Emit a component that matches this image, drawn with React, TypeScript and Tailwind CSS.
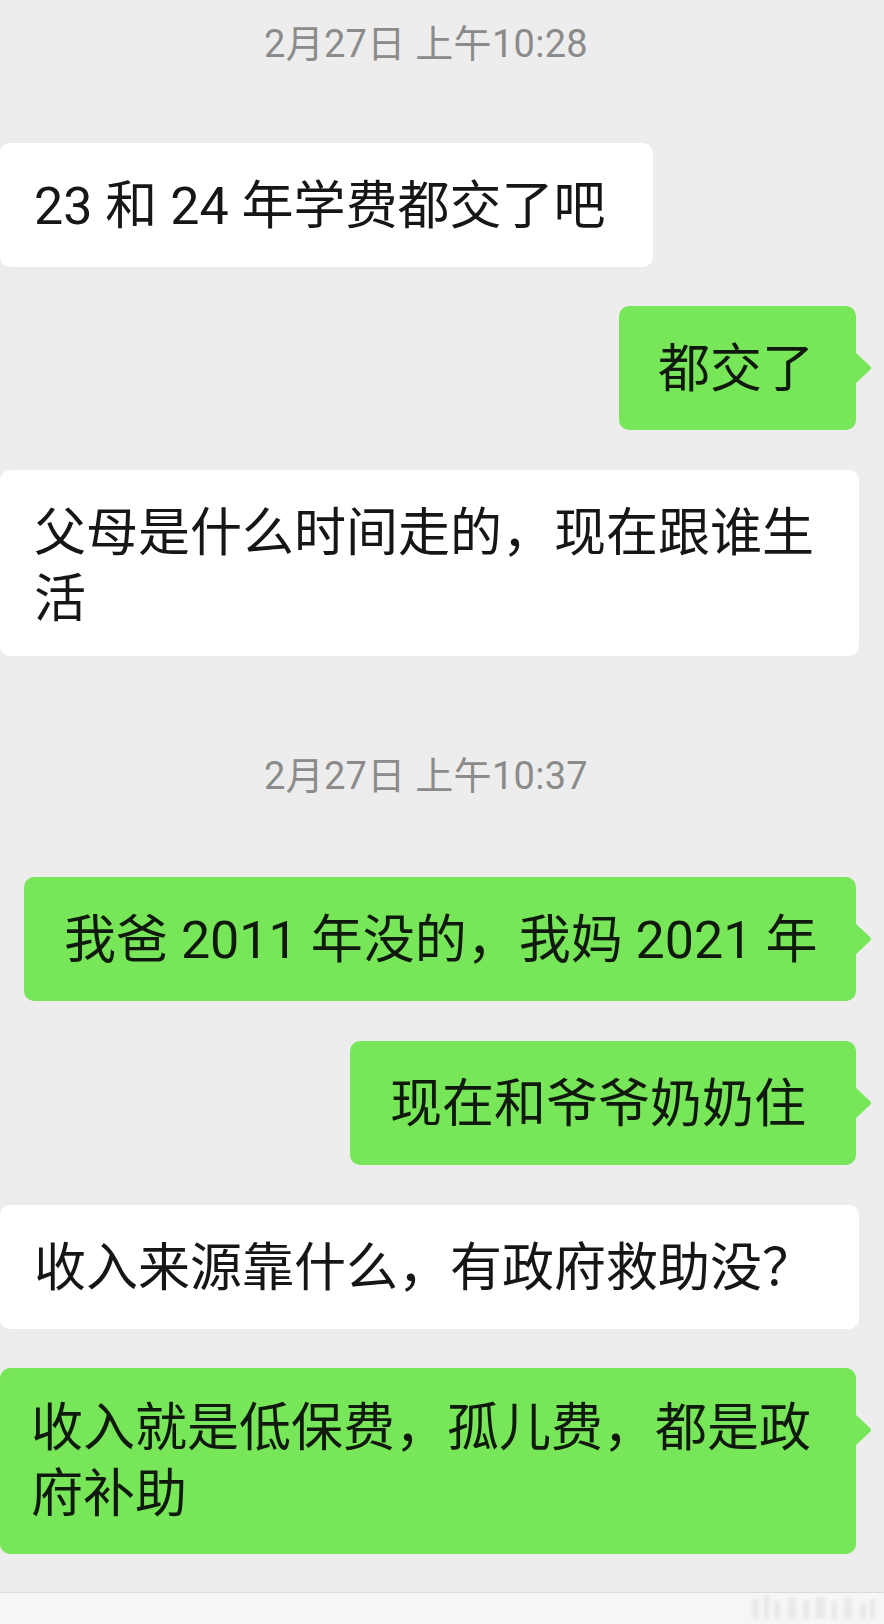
import React from "react";

const font = "font-['Roboto','Noto_Sans_CJK_SC',sans-serif]";

function Time({ text, mt }: { text: string; mt: string }) {
  return (
    <div className={`${mt} pr-[32px] text-center text-[38px] leading-[44px] tracking-[0.3px] text-[#8b8b8b] ${font}`}>{text}</div>
  );
}

function Tail() {
  return (
    <svg
      className="absolute right-[-16px] top-[46px]"
      width="17"
      height="32"
      viewBox="0 0 17 32"
    >
      <path d="M0 0 L15 14 Q17 16 15 18 L0 32 Z" fill="#78e659" />
    </svg>
  );
}

export default function App() {
  return (
    <div className={`w-[884px] h-[1624px] overflow-hidden bg-[#ededed] flex flex-col ${font}`}>
      <Time text="2月27日 上午10:28" mt="mt-[22px]" />

      <div className="mt-[77px] self-start w-[653px] bg-white rounded-[10px] pl-[34px] pt-[32px] pb-[28px] text-[52px] leading-[64px] text-[#161616] whitespace-nowrap">
        23 和 24 年学费都交了吧
      </div>

      <div className="relative mt-[39px] self-end mr-[28px] w-[237px] bg-[#78e659] rounded-[10px] pl-[39px] pt-[32px] pb-[28px] text-[52px] leading-[64px] text-[#101a0c] whitespace-nowrap">
        都交了
        <Tail />
      </div>

      <div className="mt-[40px] self-start w-[859px] bg-white rounded-[10px] pl-[34px] pt-[31px] pb-[23px] text-[52px] leading-[66px] text-[#161616] whitespace-nowrap">
        父母是什么时间走的，现在跟谁生
        <br />
        活
      </div>

      <Time text="2月27日 上午10:37" mt="mt-[98px]" />

      <div className="relative mt-[79px] self-end mr-[28px] w-[832px] bg-[#78e659] rounded-[10px] pl-[40px] pt-[32px] pb-[28px] text-[52px] leading-[64px] text-[#101a0c] whitespace-nowrap">
        我爸 2011 年没的，我妈 2021 年
        <Tail />
      </div>

      <div className="relative mt-[40px] self-end mr-[28px] w-[506px] bg-[#78e659] rounded-[10px] pl-[40px] pt-[32px] pb-[28px] text-[52px] leading-[64px] text-[#101a0c] whitespace-nowrap">
        现在和爷爷奶奶住
        <Tail />
      </div>

      <div className="mt-[40px] self-start w-[859px] bg-white rounded-[10px] pl-[34px] pt-[32px] pb-[28px] text-[52px] leading-[64px] text-[#161616] whitespace-nowrap">
        收入来源靠什么，有政府救助没？
      </div>

      <div className="relative mt-[39px] self-start w-[856px] bg-[#78e659] rounded-[10px] pl-[31px] pt-[28px] pb-[26px] text-[52px] leading-[66px] text-[#101a0c] whitespace-nowrap">
        收入就是低保费，孤儿费，都是政
        <br />
        府补助
        <Tail />
      </div>

      <div className="mt-[38px] h-px bg-[#dadada]" />
      <div className="flex-1 bg-[#f6f6f6] flex justify-end items-start pr-[6px] pt-[2px]">
        <svg width="130" height="26" viewBox="0 0 130 26" className="opacity-40">
          <defs>
            <filter id="b">
              <feGaussianBlur stdDeviation="1.4" />
            </filter>
          </defs>
          <g fill="#d6d6d6" filter="url(#b)">
            <rect x="4" y="4" width="7" height="20" />
            <rect x="16" y="0" width="5" height="24" />
            <rect x="26" y="6" width="6" height="18" />
            <rect x="40" y="3" width="8" height="21" />
            <rect x="55" y="5" width="6" height="19" />
            <rect x="68" y="2" width="9" height="22" />
            <rect x="84" y="6" width="5" height="18" />
            <rect x="96" y="4" width="8" height="20" />
            <rect x="112" y="8" width="6" height="16" />
            <rect x="122" y="4" width="5" height="20" />
          </g>
        </svg>
      </div>
    </div>
  );
}
